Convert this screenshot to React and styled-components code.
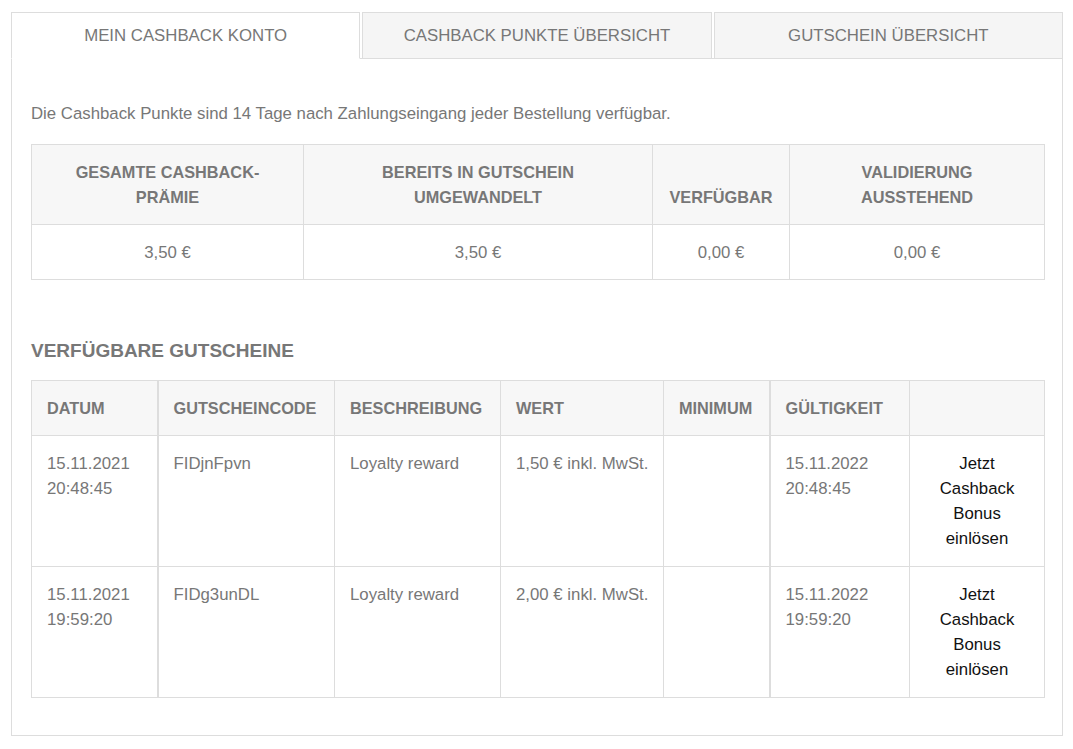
import React from "react";
import styled, { createGlobalStyle } from "styled-components";

const Global = createGlobalStyle`
  html, body { margin: 0; padding: 0; background: #fff; }
  body { font-family: "Liberation Sans", Arial, sans-serif; color: #777; }
`;

const Page = styled.div`
  padding: 12px 10px 14px 11px;
`;

const Tabs = styled.div`
  display: flex;
  gap: 2px;
`;

const Tab = styled.div`
  flex: 1;
  height: 45px;
  display: flex;
  align-items: center;
  justify-content: center;
  font-size: 16.8px;
  text-transform: uppercase;
  color: #777;
  border: 1px solid #ddd;
  border-bottom: ${(p) => (p.$active ? "1px solid #fff" : "1px solid #ddd")};
  background: ${(p) => (p.$active ? "#fff" : "#f5f5f5")};
  margin-bottom: -1px;
  position: relative;
  z-index: 1;
`;

const Panel = styled.div`
  border: 1px solid #ddd;
  padding: 42px 18px 37px 19px;
`;

const Intro = styled.p`
  margin: 0 0 18px;
  font-size: 16.8px;
  line-height: 25px;
  color: #777;
`;

const Table = styled.table`
  width: 100%;
  border-collapse: collapse;
  table-layout: fixed;
  font-size: 16.8px;
  line-height: 25px;
`;

const Th = styled.th`
  background: #f7f7f7;
  border: 1px solid #ddd;
  border-left-width: ${(p) => (p.$thick ? "2px" : "1px")};
  color: #777;
  font-weight: bold;
  font-size: 16.3px;
  text-transform: uppercase;
  padding: 15px 15px 14px;
  text-align: ${(p) => (p.$center ? "center" : "left")};
  vertical-align: ${(p) => (p.$center ? "bottom" : "middle")};
`;

const Td = styled.td`
  border: 1px solid #ddd;
  border-left-width: ${(p) => (p.$thick ? "2px" : "1px")};
  color: ${(p) => (p.$dark ? "#111" : "#777")};
  padding: 15px ${(p) => (p.$tight ? "0" : "15px")} ${(p) => (p.$tall ? "15px" : "14px")} 15px;
  white-space: ${(p) => (p.$tight ? "nowrap" : "normal")};
  text-align: ${(p) => (p.$center ? "center" : "left")};
  vertical-align: ${(p) => (p.$center && !p.$dark ? "middle" : "top")};
`;

const Heading = styled.h3`
  margin: 58px 0 17px;
  font-size: 19px;
  line-height: 25px;
  font-weight: bold;
  text-transform: uppercase;
  color: #777;
`;

const RedeemLink = styled.a`
  color: #111;
  text-decoration: none;
  display: block;
  padding: 0 10px;
`;

const summaryCols = [272, 349, 137, 255];
const voucherCols = [126, 177, 166, 163, 106, 140, 135];

const vouchers = [
  {
    date: ["15.11.2021", "20:48:45"],
    code: "FIDjnFpvn",
    desc: "Loyalty reward",
    value: "1,50 € inkl. MwSt.",
    valid: ["15.11.2022", "20:48:45"],
  },
  {
    date: ["15.11.2021", "19:59:20"],
    code: "FIDg3unDL",
    desc: "Loyalty reward",
    value: "2,00 € inkl. MwSt.",
    valid: ["15.11.2022", "19:59:20"],
  },
];

export default function App() {
  return (
    <Page>
      <Global />
      <Tabs>
        <Tab $active>Mein Cashback Konto</Tab>
        <Tab>Cashback Punkte Übersicht</Tab>
        <Tab>Gutschein Übersicht</Tab>
      </Tabs>
      <Panel>
        <Intro>
          Die Cashback Punkte sind 14 Tage nach Zahlungseingang jeder Bestellung verfügbar.
        </Intro>
        <Table>
          <colgroup>
            {summaryCols.map((w, i) => (
              <col key={i} style={{ width: w }} />
            ))}
          </colgroup>
          <thead>
            <tr>
              <Th $center>Gesamte Cashback-Prämie</Th>
              <Th $center>Bereits in Gutschein umgewandelt</Th>
              <Th $center>Verfügbar</Th>
              <Th $center>
                Validierung
                <br />
                ausstehend
              </Th>
            </tr>
          </thead>
          <tbody>
            <tr>
              <Td $center>3,50 €</Td>
              <Td $center>3,50 €</Td>
              <Td $center>0,00 €</Td>
              <Td $center>0,00 €</Td>
            </tr>
          </tbody>
        </Table>

        <Heading>Verfügbare Gutscheine</Heading>
        <Table>
          <colgroup>
            {voucherCols.map((w, i) => (
              <col key={i} style={{ width: w }} />
            ))}
          </colgroup>
          <thead>
            <tr>
              <Th>Datum</Th>
              <Th $thick>Gutscheincode</Th>
              <Th>Beschreibung</Th>
              <Th>Wert</Th>
              <Th>Minimum</Th>
              <Th $thick>Gültigkeit</Th>
              <Th></Th>
            </tr>
          </thead>
          <tbody>
            {vouchers.map((v) => (
              <tr key={v.code}>
                <Td $tall>
                  {v.date[0]}
                  <br />
                  {v.date[1]}
                </Td>
                <Td $tall $thick>{v.code}</Td>
                <Td $tall>{v.desc}</Td>
                <Td $tall $tight>{v.value}</Td>
                <Td $tall></Td>
                <Td $tall $thick>
                  {v.valid[0]}
                  <br />
                  {v.valid[1]}
                </Td>
                <Td $tall $center $dark>
                  <RedeemLink href="#">Jetzt Cashback Bonus einlösen</RedeemLink>
                </Td>
              </tr>
            ))}
          </tbody>
        </Table>
      </Panel>
    </Page>
  );
}
